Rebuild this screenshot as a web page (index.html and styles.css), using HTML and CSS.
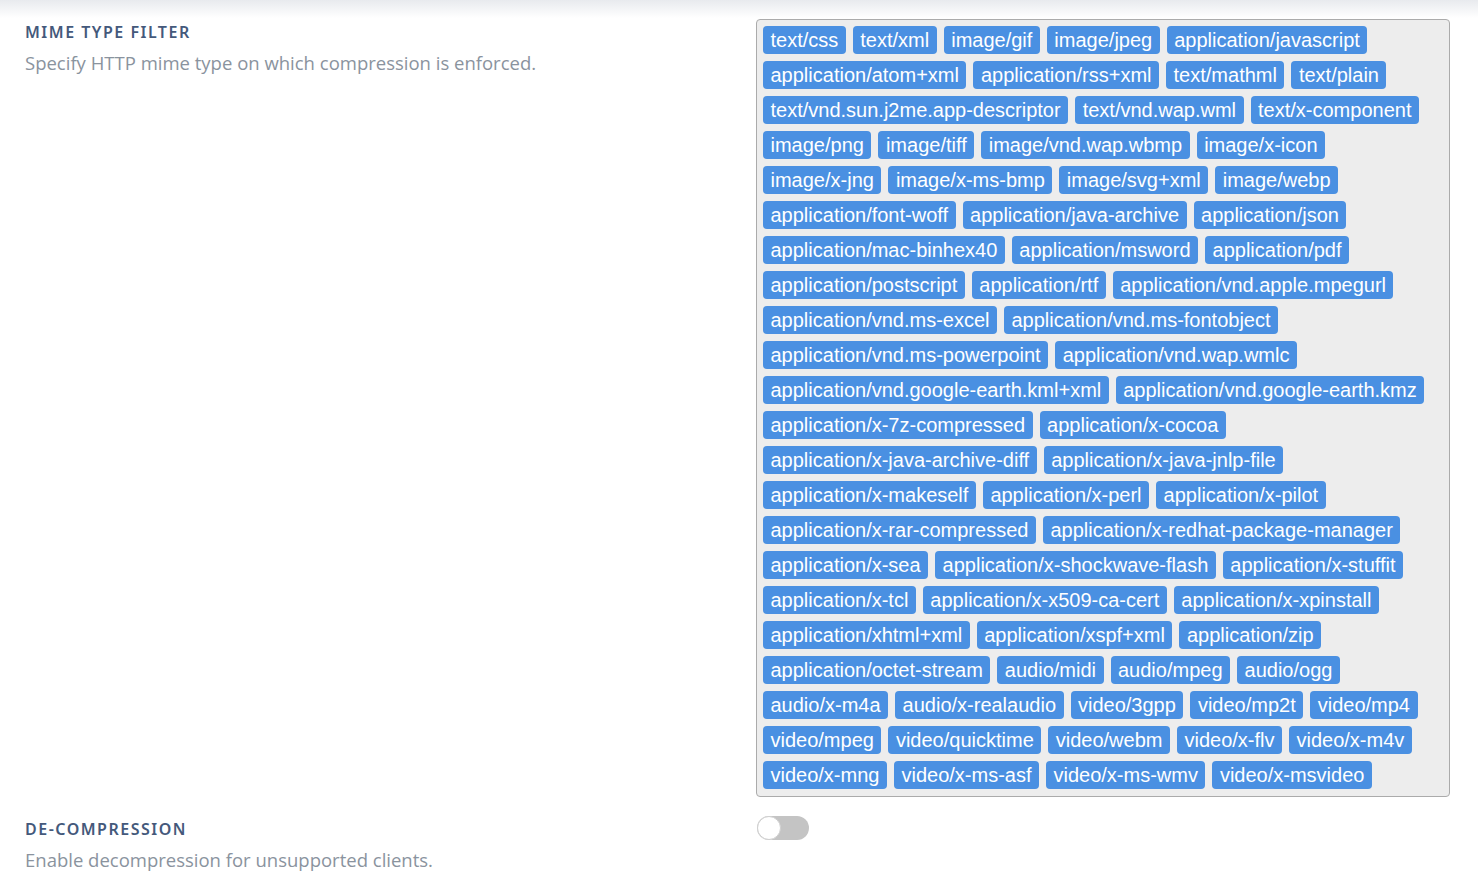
FILE: index.html
```html
<!DOCTYPE html>
<html lang="en">
<head>
<meta charset="utf-8">
<title>Compression settings</title>
<link rel="stylesheet" href="styles.css">
</head>
<body>
<div class="page">
  <div class="setting">
    <div class="info">
      <div class="label">MIME TYPE FILTER</div>
      <div class="desc">Specify HTTP mime type on which compression is enforced.</div>
    </div>
    <div class="tags">
      <span class="tag">text/css</span>
      <span class="tag">text/xml</span>
      <span class="tag">image/gif</span>
      <span class="tag">image/jpeg</span>
      <span class="tag">application/javascript</span>
      <span class="tag">application/atom+xml</span>
      <span class="tag">application/rss+xml</span>
      <span class="tag">text/mathml</span>
      <span class="tag">text/plain</span>
      <span class="tag">text/vnd.sun.j2me.app-descriptor</span>
      <span class="tag">text/vnd.wap.wml</span>
      <span class="tag">text/x-component</span>
      <span class="tag">image/png</span>
      <span class="tag">image/tiff</span>
      <span class="tag">image/vnd.wap.wbmp</span>
      <span class="tag">image/x-icon</span>
      <span class="tag">image/x-jng</span>
      <span class="tag">image/x-ms-bmp</span>
      <span class="tag">image/svg+xml</span>
      <span class="tag">image/webp</span>
      <span class="tag">application/font-woff</span>
      <span class="tag">application/java-archive</span>
      <span class="tag">application/json</span>
      <span class="tag">application/mac-binhex40</span>
      <span class="tag">application/msword</span>
      <span class="tag">application/pdf</span>
      <span class="tag">application/postscript</span>
      <span class="tag">application/rtf</span>
      <span class="tag">application/vnd.apple.mpegurl</span>
      <span class="tag">application/vnd.ms-excel</span>
      <span class="tag">application/vnd.ms-fontobject</span>
      <span class="tag">application/vnd.ms-powerpoint</span>
      <span class="tag">application/vnd.wap.wmlc</span>
      <span class="tag">application/vnd.google-earth.kml+xml</span>
      <span class="tag">application/vnd.google-earth.kmz</span>
      <span class="tag">application/x-7z-compressed</span>
      <span class="tag">application/x-cocoa</span>
      <span class="tag">application/x-java-archive-diff</span>
      <span class="tag">application/x-java-jnlp-file</span>
      <span class="tag">application/x-makeself</span>
      <span class="tag">application/x-perl</span>
      <span class="tag">application/x-pilot</span>
      <span class="tag">application/x-rar-compressed</span>
      <span class="tag">application/x-redhat-package-manager</span>
      <span class="tag">application/x-sea</span>
      <span class="tag">application/x-shockwave-flash</span>
      <span class="tag">application/x-stuffit</span>
      <span class="tag">application/x-tcl</span>
      <span class="tag">application/x-x509-ca-cert</span>
      <span class="tag">application/x-xpinstall</span>
      <span class="tag">application/xhtml+xml</span>
      <span class="tag">application/xspf+xml</span>
      <span class="tag">application/zip</span>
      <span class="tag">application/octet-stream</span>
      <span class="tag">audio/midi</span>
      <span class="tag">audio/mpeg</span>
      <span class="tag">audio/ogg</span>
      <span class="tag">audio/x-m4a</span>
      <span class="tag">audio/x-realaudio</span>
      <span class="tag">video/3gpp</span>
      <span class="tag">video/mp2t</span>
      <span class="tag">video/mp4</span>
      <span class="tag">video/mpeg</span>
      <span class="tag">video/quicktime</span>
      <span class="tag">video/webm</span>
      <span class="tag">video/x-flv</span>
      <span class="tag">video/x-m4v</span>
      <span class="tag">video/x-mng</span>
      <span class="tag">video/x-ms-asf</span>
      <span class="tag">video/x-ms-wmv</span>
      <span class="tag">video/x-msvideo</span>
    </div>
  </div>
  <div class="setting">
    <div class="info">
      <div class="label">DE-COMPRESSION</div>
      <div class="desc">Enable decompression for unsupported clients.</div>
    </div>
    <div class="control">
      <span class="toggle"><span class="knob"></span></span>
    </div>
  </div>
</div>
</body>
</html>
```

FILE: styles.css
```css
html, body {
  margin: 0;
  padding: 0;
}
body {
  background: #ffffff linear-gradient(#e8eaee, #ffffff 18px) no-repeat;
  font-family: "Liberation Sans", Arial, sans-serif;
  min-height: 896px;
}
.page {
  padding: 19px 28px 0 25px;
  display: flex;
  flex-direction: column;
  gap: 19px;
}
.setting {
  display: grid;
  grid-template-columns: 1fr 694px;
  column-gap: 20px;
  align-items: start;
}
.info {
  padding-top: 1px;
}
.label {
  font-family: "Noto Sans", "Open Sans", sans-serif;
  font-size: 16px;
  line-height: 24px;
  font-weight: 600;
  letter-spacing: 1.5px;
  color: #44597b;
}
.desc {
  margin-top: 7px;
  font-family: "Open Sans", "Noto Sans", sans-serif;
  font-size: 18.5px;
  line-height: 24px;
  color: #8a939e;
}
.tags {
  box-sizing: border-box;
  background: #ededed;
  border: 1px solid #ababab;
  border-radius: 4px;
  padding: 6px 6px 7px 6px;
  display: flex;
  flex-wrap: wrap;
  gap: 7px 7px;
}
.tag {
  background: #4a90e2;
  color: #ffffff;
  font-family: "Liberation Sans", Arial, sans-serif;
  font-size: 20px;
  line-height: 28px;
  padding: 0 7.5px;
  border-radius: 4px;
  white-space: nowrap;
}
.control {
  padding-top: 0;
}
.toggle {
  display: block;
  width: 52px;
  height: 24px;
  margin-left: 1px;
  border-radius: 12px;
  background: #c4c4c4;
  position: relative;
}
.knob {
  position: absolute;
  left: 0;
  top: 0;
  box-sizing: border-box;
  width: 24px;
  height: 24px;
  border-radius: 50%;
  background: #ffffff;
  border: 1px solid #cfcfcf;
}
```
